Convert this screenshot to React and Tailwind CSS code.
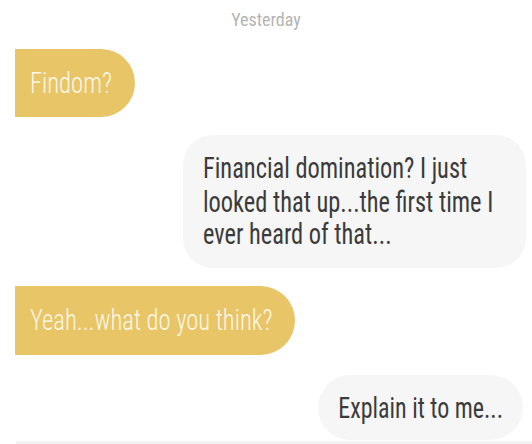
const font = "[font-family:'Roboto_Condensed',Roboto,sans-serif]";

function Incoming({ text, h }) {
  return (
    <div className={`ml-[15px] flex w-fit items-center rounded-l-[3px] rounded-r-full bg-[#e8c567] pl-[15px] pr-[23px] ${h}`}>
      <span className="inline-block scale-y-[1.2] text-[24.6px] leading-none font-light text-[#fdf8ea]">{text}</span>
    </div>
  );
}

export default function App() {
  return (
    <div className={`flex h-[444px] w-[532px] flex-col overflow-hidden bg-white ${font}`}>
      <div className="pt-[10px] text-center text-[18px] leading-[20px] text-[#b4b4b4]">
        <span className="inline-block scale-y-[1.05]">Yesterday</span>
      </div>

      <div className="mt-[19px]">
        <Incoming text="Findom?" h="h-[68px]" />
      </div>

      <div className="mt-[18px] ml-auto mr-[6px] flex h-[133px] w-[343px] items-center rounded-[30px] bg-[#f6f6f6] pl-5 pr-[21px]">
        <div className="scale-y-[1.2] text-[24.4px] leading-[27.5px] text-[#3b3b3b]">
          Financial domination? I just looked that up...the first time I ever heard of that...
        </div>
      </div>

      <div className="mt-[18px]">
        <Incoming text="Yeah...what do you think?" h="h-[69px]" />
      </div>

      <div className="mt-[20px] ml-auto mr-[9px] flex h-[65px] items-center rounded-full bg-[#f6f6f6] px-5">
        <span className="inline-block scale-y-[1.2] text-[24px] leading-none text-[#3b3b3b]">Explain it to me...</span>
      </div>

      <div className="mt-[1px] ml-[16px] h-[3px] bg-[#f3f3f3]" />
    </div>
  );
}
